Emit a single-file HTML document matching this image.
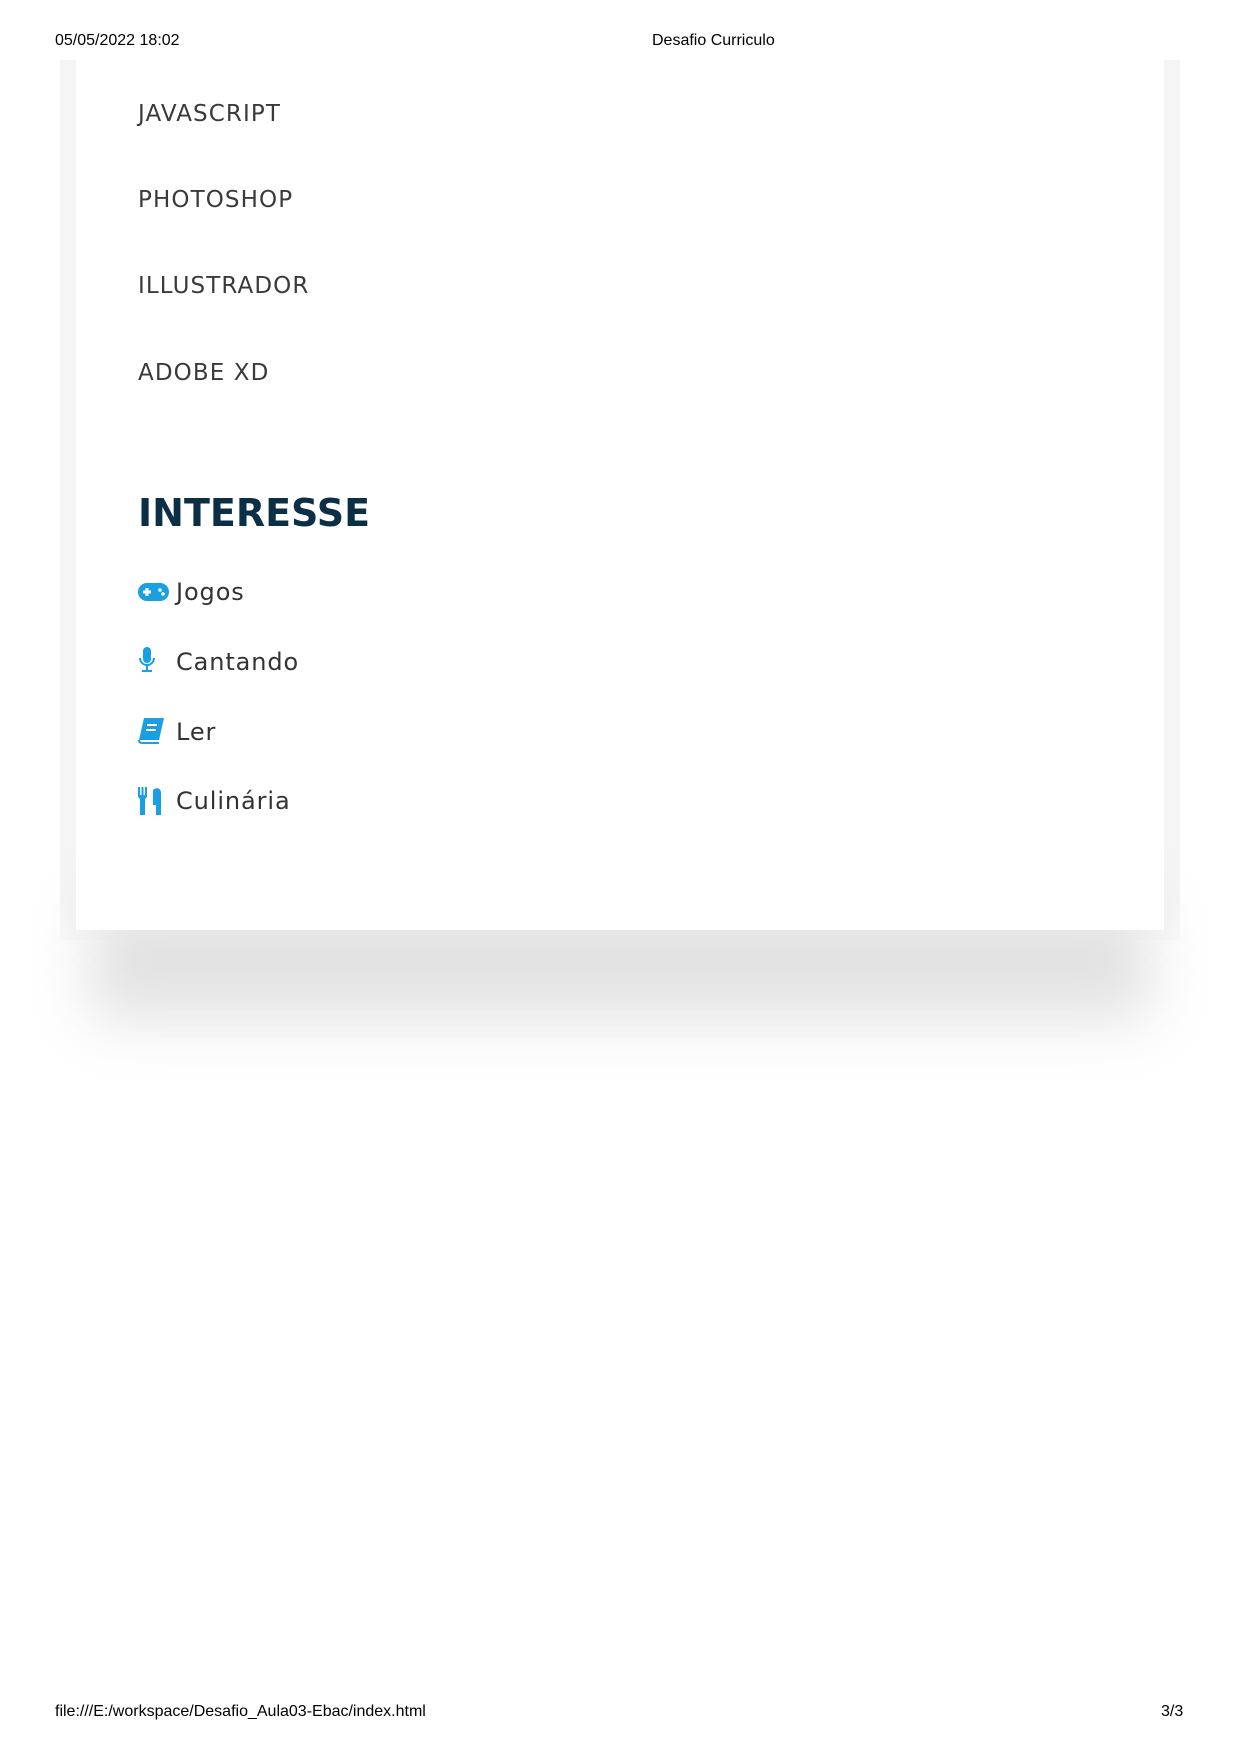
<!DOCTYPE html>
<html><head><meta charset="utf-8"><style>
*{margin:0;padding:0;box-sizing:border-box}
body{width:1240px;height:1754px;background:#fff;position:relative;font-family:"Liberation Sans",sans-serif;overflow:hidden}
.hd{position:absolute;font-size:16px;color:#000}
.outer{position:absolute;left:60px;top:60px;width:1120px;height:880px;background:linear-gradient(#f5f5f5 0,#f5f5f5 840px,#fbfbfb 880px)}
.shadow{position:absolute;left:90px;top:900px;width:1060px;height:120px;background:#e2e2e2;filter:blur(30px)}
.card{position:absolute;left:76px;top:60px;width:1088px;height:870px;background:#fff}
.sk{position:absolute;left:138px;font-family:"DejaVu Sans",sans-serif;font-size:23px;color:#3a3a3a;letter-spacing:1.1px;line-height:1}
.h{position:absolute;left:138px;top:494px;font-family:"DejaVu Sans",sans-serif;font-weight:bold;font-size:38px;color:#0b2f45;letter-spacing:0px;line-height:1}
.it{position:absolute;left:176px;font-family:"DejaVu Sans",sans-serif;font-size:24px;color:#333;letter-spacing:0.9px;line-height:1}
svg{position:absolute}
</style></head><body>
<div class="outer"></div>
<div class="shadow"></div>
<div class="card"></div>
<div class="hd" style="left:55px;top:32px">05/05/2022 18:02</div>
<div class="hd" style="left:652px;top:32px">Desafio Curriculo</div>
<div class="sk" style="top:103px">JAVASCRIPT</div>
<div class="sk" style="top:189px">PHOTOSHOP</div>
<div class="sk" style="top:275px">ILLUSTRADOR</div>
<div class="sk" style="top:362px">ADOBE XD</div>
<div class="h">INTERESSE</div>
<svg style="left:138px;top:583px" width="31" height="18" viewBox="0 0 31 18"><rect x="0" y="0" width="31" height="18" rx="9" fill="#1a9fe3"/><rect x="5" y="7.5" width="8" height="3" fill="#fff"/><rect x="7.5" y="5" width="3" height="8" fill="#fff"/><circle cx="22" cy="7" r="1.8" fill="#fff"/><circle cx="25" cy="11" r="1.8" fill="#fff"/></svg>
<div class="it" style="top:580px">Jogos</div>
<svg style="left:138px;top:647px" width="18" height="26" viewBox="0 0 18 26"><rect x="5" y="0" width="8" height="16" rx="4" fill="#1a9fe3"/><path d="M2 11a7 7 0 0 0 14 0" stroke="#1a9fe3" stroke-width="2" fill="none"/><rect x="8" y="18" width="2" height="5" fill="#1a9fe3"/><rect x="4" y="23" width="10" height="2" fill="#1a9fe3"/></svg>
<div class="it" style="top:650px">Cantando</div>
<svg style="left:138px;top:718px" width="27" height="26" viewBox="0 0 27 26"><path d="M6 0h20l-5 22H1z" fill="#1a9fe3"/><path d="M1 22c0 3 2 3 4 3h16" stroke="#1a9fe3" stroke-width="2" fill="none"/><rect x="9" y="6" width="10" height="2" fill="#fff"/><rect x="8" y="11" width="10" height="2" fill="#fff"/></svg>
<div class="it" style="top:720px">Ler</div>
<svg style="left:138px;top:787px" width="24" height="28" viewBox="0 0 24 28"><path d="M0 0h2v8h1.5V0h2v8H7V0h2v10l-2 2v16H2V12L0 10z" fill="#1a9fe3"/><path d="M16 2c4-2 7 0 7 4v22h-5v-10h-3V6c0-2 0-3 1-4z" fill="#1a9fe3"/></svg>
<div class="it" style="top:789px">Culinária</div>
<div class="hd" style="left:55px;top:1703px">file:///E:/workspace/Desafio_Aula03-Ebac/index.html</div>
<div class="hd" style="left:1161px;top:1703px">3/3</div>
</body></html>
